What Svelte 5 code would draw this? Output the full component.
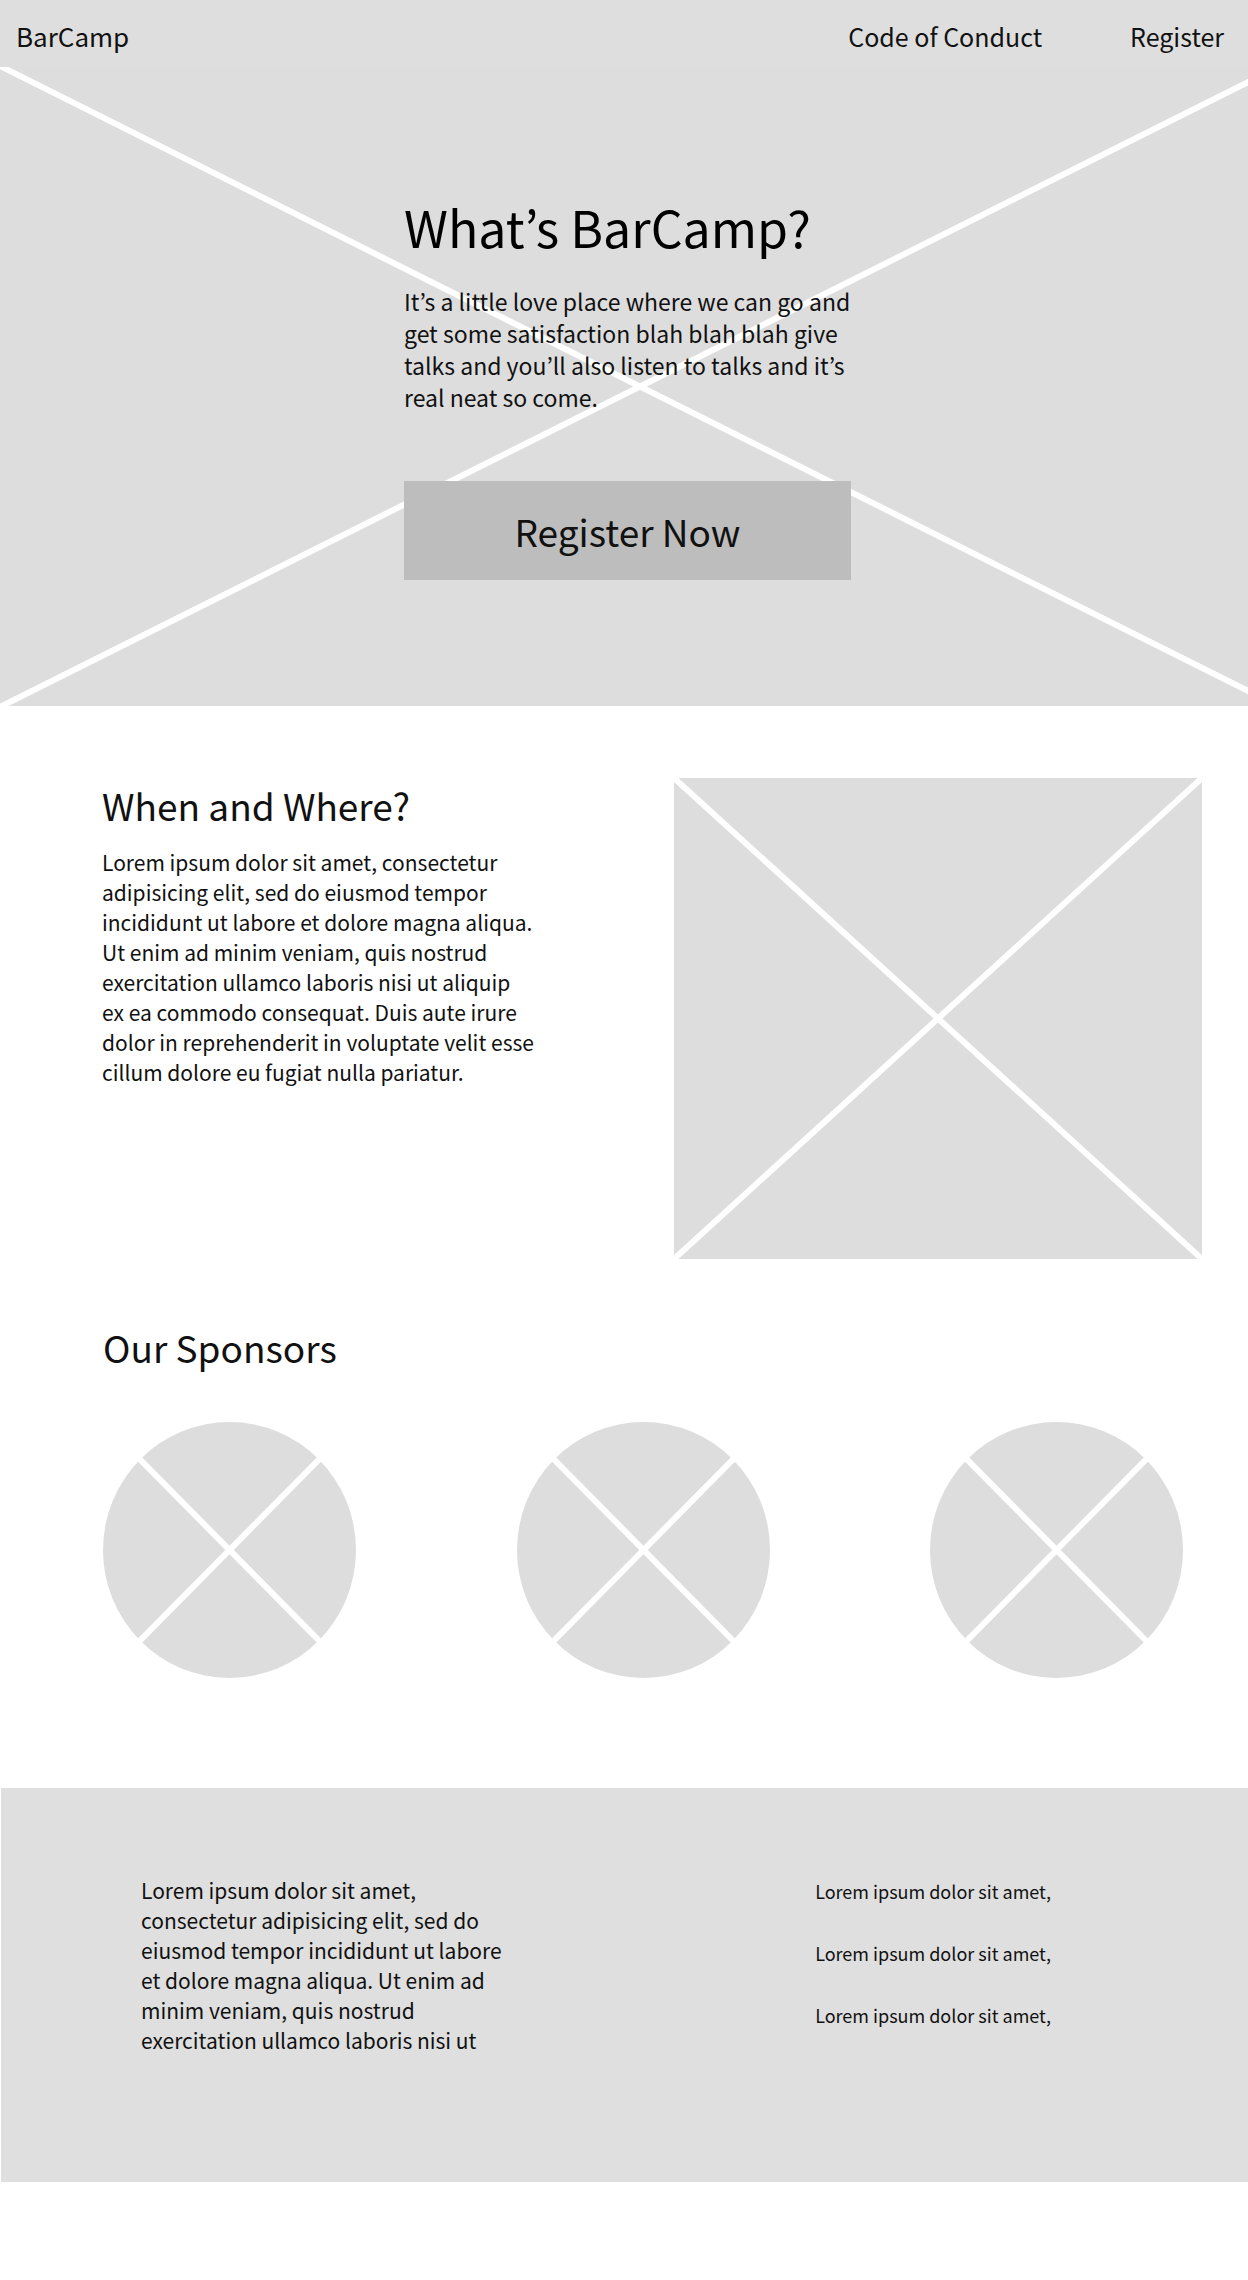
<script>
  const navLinks = [
    { label: 'Code of Conduct', href: '#conduct' },
    { label: 'Register', href: '#register' }
  ];
  const sponsors = ['Sponsor one', 'Sponsor two', 'Sponsor three'];
  const footerLinks = ['#first', '#second', '#third'];
</script>

<header class="bar">
  <a class="brand" href="#top">BarCamp</a>
  <nav class="nav" aria-label="Main">
    {#each navLinks as link}
      <a href={link.href}>{link.label}</a>
    {/each}
  </nav>
</header>

<main>
  <section class="hero">
    <svg class="backdrop" viewBox="0 0 1248 639" preserveAspectRatio="none" aria-hidden="true">
      <path class="cross" d="M2 0 1278 639M2 639 1278 0" />
    </svg>
    <div class="pitch">
      <h1>What’s BarCamp?</h1>
      <p>
        It’s a little love place where we can go and get some satisfaction blah blah blah give talks
        and you’ll also listen to talks and it’s real neat so come.
      </p>
      <button type="button">Register Now</button>
    </div>
  </section>

  <section class="when">
    <div class="details">
      <h2>When and Where?</h2>
      <p>
        Lorem ipsum dolor sit amet, consectetur adipisicing elit, sed do eiusmod tempor incididunt
        ut labore et dolore magna aliqua. Ut enim ad minim veniam, quis nostrud exercitation ullamco
        laboris nisi ut aliquip<br />ex ea commodo consequat. Duis aute irure dolor in reprehenderit
        in voluptate velit esse cillum dolore eu fugiat nulla pariatur.
      </p>
    </div>
    <svg class="map" viewBox="0 0 528 481" role="img" aria-label="Map placeholder">
      <rect class="fill" width="528" height="481" />
      <path class="cross" d="M0 0 528 481M0 481 528 0" />
    </svg>
  </section>

  <section class="sponsors">
    <h2>Our Sponsors</h2>
    <ul>
      {#each sponsors as name}
        <li>
          <svg viewBox="0 0 253 256" role="img" aria-label={name}>
            <ellipse class="fill" cx="126.5" cy="128" rx="126.5" ry="128" />
            <path class="cross" d="M0 0 253 256M0 256 253 0" />
          </svg>
        </li>
      {/each}
    </ul>
  </section>
</main>

<footer class="footer">
  <p>
    Lorem ipsum dolor sit amet, consectetur adipisicing elit, sed do eiusmod tempor incididunt ut
    labore et dolore magna aliqua. Ut enim ad minim veniam, quis nostrud exercitation ullamco
    laboris nisi ut
  </p>
  <ul>
    {#each footerLinks as href}
      <li><a {href}>Lorem ipsum dolor sit amet,</a></li>
    {/each}
  </ul>
</footer>

<style>
  :global(body) {
    margin: 0;
    background: #fff;
    color: #111;
    font-family: 'Noto Sans CJK KR', 'Noto Sans', sans-serif;
  }

  h1,
  h2,
  p,
  ul {
    margin: 0;
    padding: 0;
    font-weight: 400;
  }

  ul {
    list-style: none;
  }

  a {
    color: inherit;
    text-decoration: none;
  }

  svg {
    display: block;
  }

  h2 {
    font-size: 37px;
    line-height: 48px;
  }

  .fill {
    fill: #ddd;
  }

  .cross {
    fill: none;
    stroke: #fff;
    stroke-width: 6px;
    stroke-linecap: square;
    vector-effect: non-scaling-stroke;
  }

  .bar {
    display: flex;
    align-items: center;
    justify-content: space-between;
    box-sizing: border-box;
    min-height: 67px;
    padding: 4px 24px 0 16px;
    background: #dedede;
    font-size: 25px;
    line-height: 32px;
  }

  .brand {
    font-size: 26px;
  }

  .nav {
    display: flex;
    gap: 88px;
  }

  .hero {
    position: relative;
    padding: 127px 0 126px 7px;
    background: #ddd;
  }

  .backdrop {
    position: absolute;
    inset: 0;
    width: 100%;
    height: 100%;
  }

  .pitch {
    position: relative;
    display: flex;
    flex-direction: column;
    max-width: 447px;
    margin: 0 auto;
  }

  h1 {
    font-size: 50px;
    line-height: 64px;
    color: #000;
  }

  .pitch p {
    margin-top: 27px;
    font-size: 23px;
    line-height: 32px;
  }

  .pitch button {
    margin-top: 68px;
    padding: 26px 0 25px;
    border: 0;
    background: #bdbdbd;
    color: inherit;
    font-family: inherit;
    font-size: 37px;
    line-height: 48px;
    cursor: pointer;
  }

  .when {
    display: grid;
    grid-template-columns: 440px minmax(0, 528px);
    justify-content: space-between;
    align-items: start;
    padding: 72px 46px 0 102px;
  }

  .details {
    padding-top: 3px;
  }

  .details p {
    margin-top: 18px;
    font-size: 21px;
    line-height: 30px;
  }

  .map {
    width: 100%;
  }

  .sponsors {
    padding: 64px 65px 110px 103px;
  }

  .sponsors ul {
    display: flex;
    justify-content: space-between;
    margin-top: 51px;
  }

  .sponsors li {
    flex: 0 1 253px;
  }

  .footer {
    display: flex;
    justify-content: space-between;
    margin: 0 0 98px 1px;
    padding: 87px 197px 127px 140px;
    background: #dfdfdf;
  }

  .footer p {
    max-width: 372px;
    font-size: 21px;
    line-height: 30px;
  }

  .footer ul {
    display: flex;
    flex-direction: column;
    gap: 36px;
    padding-top: 3px;
    font-size: 18px;
    line-height: 26px;
  }
</style>
